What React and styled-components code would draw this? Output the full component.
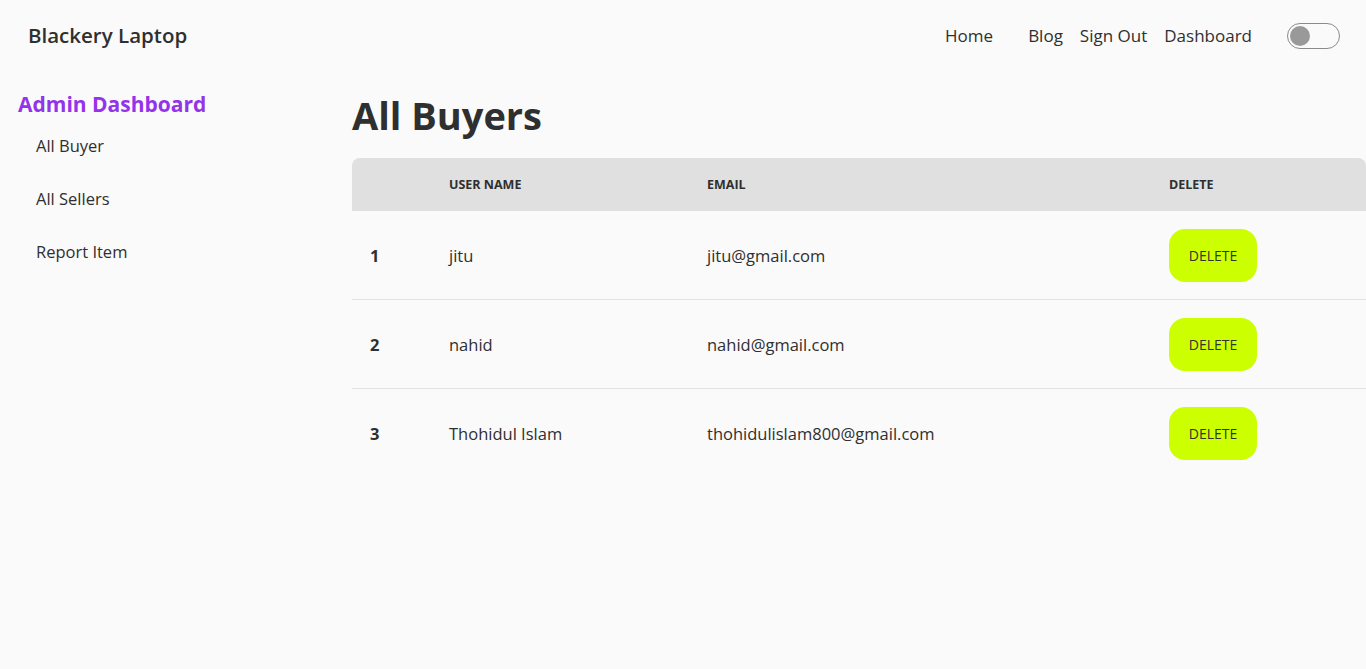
import React, { useState } from "react";
import styled, { createGlobalStyle } from "styled-components";

const buyers = [
  { id: 1, name: "jitu", email: "jitu@gmail.com" },
  { id: 2, name: "nahid", email: "nahid@gmail.com" },
  { id: 3, name: "Thohidul Islam", email: "thohidulislam800@gmail.com" },
];

const GlobalStyle = createGlobalStyle`
  html, body {
    margin: 0;
    padding: 0;
    background: #fafafa;
  }
  body {
    font-family: "Open Sans", "Noto Sans", sans-serif;
    color: #2f2f2f;
  }
  * {
    box-sizing: border-box;
  }
`;

const App = () => {
  const [dark, setDark] = useState(false);

  return (
    <>
      <GlobalStyle />
      <Page>
        <Navbar>
          <Brand>Blackery Laptop</Brand>
          <NavLinks>
            <NavLink $wide>Home</NavLink>
            <NavLink>Blog</NavLink>
            <NavLink>Sign Out</NavLink>
            <NavLink $wide>Dashboard</NavLink>
            <Toggle $on={dark} onClick={() => setDark(!dark)}>
              <Knob $on={dark} />
            </Toggle>
          </NavLinks>
        </Navbar>

        <Layout>
          <Sidebar>
            <SideTitle>Admin Dashboard</SideTitle>
            <SideMenu>
              <SideItem>All Buyer</SideItem>
              <SideItem>All Sellers</SideItem>
              <SideItem>Report Item</SideItem>
            </SideMenu>
          </Sidebar>

          <Content>
            <Heading>All Buyers</Heading>
            <Table>
              <thead>
                <tr>
                  <Th $w={81}></Th>
                  <Th $w={258}>User Name</Th>
                  <Th $w={462}>Email</Th>
                  <Th>Delete</Th>
                </tr>
              </thead>
              <tbody>
                {buyers.map((b) => (
                  <Row key={b.id}>
                    <Td $bold>{b.id}</Td>
                    <Td>{b.name}</Td>
                    <Td>{b.email}</Td>
                    <Td>
                      <DeleteButton>Delete</DeleteButton>
                    </Td>
                  </Row>
                ))}
              </tbody>
            </Table>
          </Content>
        </Layout>
      </Page>
    </>
  );
};

export default App;

const Page = styled.div`
  min-height: 669px;
  background: #fafafa;
`;

const Navbar = styled.div`
  display: flex;
  align-items: center;
  justify-content: space-between;
  height: 70px;
  padding: 0 26px 0 28px;
`;

const Brand = styled.div`
  font-size: 20.5px;
  font-weight: 600;
  color: #2f2f2f;
`;

const NavLinks = styled.div`
  display: flex;
  align-items: center;
`;

const NavLink = styled.a`
  font-size: 17px;
  color: #2f2f2f;
  cursor: pointer;
  margin-right: ${(p) => (p.$wide ? "35px" : "17px")};
`;

const Toggle = styled.div`
  position: relative;
  width: 53px;
  height: 26px;
  margin-top: 1px;
  border: 1px solid #8a8a8a;
  border-radius: 13px;
  cursor: pointer;
`;

const Knob = styled.span`
  position: absolute;
  top: 2px;
  left: ${(p) => (p.$on ? "29px" : "2px")};
  width: 20px;
  height: 20px;
  border-radius: 50%;
  background: #999;
`;

const Layout = styled.div`
  display: grid;
  grid-template-columns: 352px 1fr;
`;

const Sidebar = styled.aside`
  padding: 20px 0 0 18px;
`;

const SideTitle = styled.h2`
  margin: 0;
  font-size: 21px;
  font-weight: 700;
  color: #9333ea;
  line-height: 28px;
`;

const SideMenu = styled.ul`
  list-style: none;
  margin: 1px 0 0;
  padding: 0 0 0 18px;
`;

const SideItem = styled.li`
  font-size: 16.5px;
  line-height: 53px;
  height: 53px;
  color: #2f2f2f;
`;

const Content = styled.main`
  min-width: 0;
`;

const Heading = styled.h1`
  margin: 20px 0 18px;
  font-size: 38px;
  font-weight: 700;
  line-height: 50px;
  color: #2f2f2f;
`;

const Table = styled.table`
  width: 100%;
  border-collapse: separate;
  border-spacing: 0;
  thead tr th:first-child {
    border-top-left-radius: 8px;
  }
  thead tr th:last-child {
    border-top-right-radius: 8px;
  }
`;

const Th = styled.th`
  width: ${(p) => (p.$w ? `${p.$w}px` : "auto")};
  height: 53px;
  padding: 0 16px;
  background: #e0e0e0;
  text-align: left;
  font-size: 12.5px;
  font-weight: 700;
  text-transform: uppercase;
  color: #2f2f2f;
`;

const Row = styled.tr`
  td {
    border-bottom: 1px solid #e2e2e2;
  }
  &:last-child td {
    border-bottom: none;
  }
`;

const Td = styled.td`
  height: 89px;
  padding: 0 16px;
  font-size: 16.5px;
  font-weight: ${(p) => (p.$bold ? 700 : 400)};
  color: #2f2f2f;
  &:first-child {
    padding-left: 18px;
  }
`;

const DeleteButton = styled.button`
  width: 88px;
  height: 53px;
  border: none;
  border-radius: 16px;
  background: #ccff00;
  color: #333;
  font-family: inherit;
  font-size: 14px;
  font-weight: 400;
  text-transform: uppercase;
  cursor: pointer;
`;
